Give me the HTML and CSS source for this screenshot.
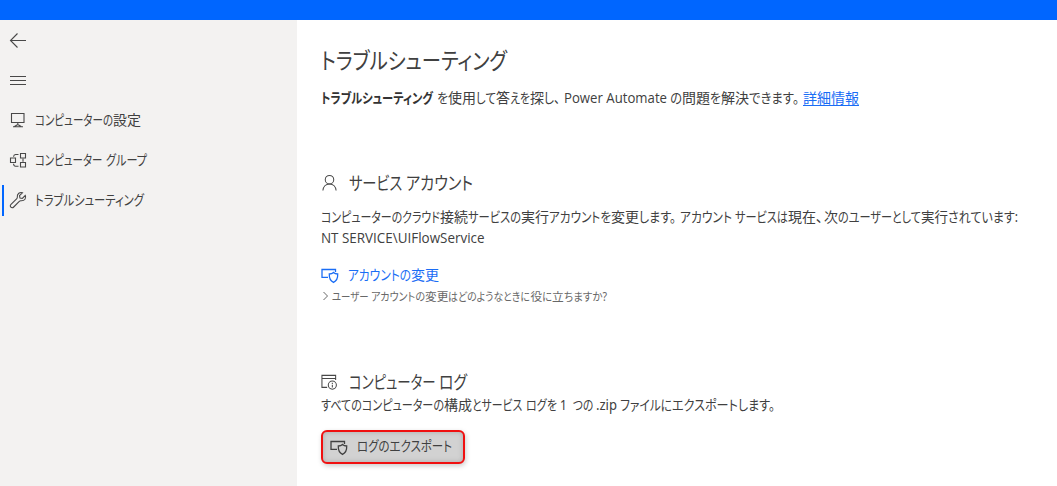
FILE: index.html
```html
<!DOCTYPE html>
<html lang="ja">
<head>
<meta charset="utf-8">
<title>トラブルシューティング</title>
<link rel="stylesheet" href="styles.css">
</head>
<body>
<div class="topbar"></div>
<div class="shell">
  <nav class="sidebar">
    <div class="item"><svg class="icon" viewBox="0 0 18 18"><path d="M17 9.500H1.500M8.500 2.500l-7 7 7 7"/></svg></div>
    <div class="item"><svg class="icon" viewBox="0 0 18 18"><path d="M1 5.500h16M1 9.500h16M1 13.500h16"/></svg></div>
    <div class="item"><svg class="icon" viewBox="0 0 18 18"><path d="M2.500 2.500h12.500v9h-12.500zM8.800 11.500v2M4 15.800h10M5.500 15.500l3.300-2 3.300 2"/></svg><span class="label"><span data-w="78">コンピューターの</span><span data-w="28">設定</span></span></div>
    <div class="item"><svg class="icon" viewBox="0 0 18 18"><path d="M1.500 7h5v4.500h-5zM11.500 2.500h5V7h-5zM11.500 11.500h5V16h-5zM4.500 5.800C4.700 4.300 5.500 3.500 6.500 3.500h3M4.500 12.700c.2 1.700 1 2.500 2 2.500h3M14 7.800v2.900"/></svg><span class="label"><span data-w="70">コンピューター </span><span class="gap" data-w="41">グループ</span></span></div>
    <div class="item selected"><svg class="icon" viewBox="0 0 18 18"><path d="M16.300 4.500l-3 3-2.300-.5-.5-2.300 3-3C11 .8 7.800 2.500 8.300 6.300c0 .8-.3 1.200-.7 1.600L2 13.300c-2 2 .7 4.700 2.700 2.700l5.600-5.600c.5-.5 1-.7 1.700-.6 3.700.3 5.500-2.700 4.300-5.300z"/></svg><span class="label"><span data-w="109">トラブルシューティング</span></span></div>
  </nav>
  <main class="content">
    <h1 class="title"><span data-w="186">トラブルシューティング</span></h1>
    <p class="line intro"><b data-w="112">トラブルシューティング</b><span class="gap" data-w="14"> を</span><span>使用</span><span data-w="20">して</span><span>答</span><span data-w="20">えを</span><span>探</span><span data-w="16">し、</span><span class="latin wide-gap" data-w="103">Power Automate</span><span data-w="15"> の</span><span>問題</span><span data-w="11">を</span><span>解決</span><span data-w="50">できます。</span><a class="link wide-gap" href="#">詳細情報</a></p>

    <section class="service">
      <h2 class="heading"><svg class="icon" viewBox="0 0 18 18"><circle cx="9" cy="5.500" r="4.500"/><path d="M2 17c.3-4 3-7 7-7s6.700 3 7 7"/></svg><span><span data-w="57">サービス </span><span data-w="67">アカウント</span></span></h2>
      <p class="line"><span data-w="119">コンピューターのクラウド</span><span>接続</span><span data-w="53">サービスの</span><span>実行</span><span data-w="62">アカウントを</span><span>変更</span><span data-w="37">します。</span><span class="wide-gap" data-w="55">アカウント </span><span data-w="53">サービスは</span><span>現在</span><span data-w="7">、</span><span class="gap">次</span><span data-w="83">のユーザーとして</span><span data-w="27">実行</span><span data-w="70">されています:</span></p>
      <p class="line"><span class="latin" data-w="163.500">NT SERVICE\UIFlowService</span></p>
      <a class="change" href="#"><svg class="icon shield" viewBox="0 0 18 18"><path d="M7 11.300H1V3.500h13.500V6M8.300 8q2.600 0 4.200-1.500Q14.100 8 16.700 8c.2 4.200-1.200 6.900-4.200 8.400-3-1.500-4.400-4.200-4.200-8.400z"/></svg><span><span data-w="63">アカウントの</span><span>変更</span></span></a>
      <p class="hint"><svg class="chevron" viewBox="0 0 8 10"><path d="M2 1l4 4-4 4"/></svg><span><span data-w="39">ユーザー </span><span data-w="54">アカウントの</span><span>変更</span><span data-w="82">はどのようなときに</span><span>役</span><span data-w="10">に</span><span>立</span><span data-w="43">ちますか?</span></span></p>
    </section>

    <section class="logs">
      <h2 class="heading"><svg class="icon" viewBox="0 0 18 18"><path d="M6.500 14.700H1V2h14.500v5M1 5.300h14.500"/><circle cx="12" cy="12.300" r="4.300"/><path d="M12 12v2.700M12 9.800v1.200"/></svg><span><span data-w="90">コンピューター </span><span data-w="28">ログ</span></span></h2>
      <p class="line"><span data-w="123">すべてのコンピューターの</span><span>構成</span><span data-w="53">とサービス </span><span class="gap" data-w="31">ログを</span><span data-w="13"> 1 </span><span data-w="26"> つの </span><span data-w="21">.zip</span><span data-w="55"> ファイルに</span><span data-w="103">エクスポートします。</span></p>
      <button class="export"><svg class="icon shield" viewBox="0 0 18 18"><path d="M7 11.300H1V3.500h13.500V6M8.300 8q2.600 0 4.200-1.500Q14.100 8 16.700 8c.2 4.200-1.200 6.900-4.200 8.400-3-1.500-4.400-4.200-4.200-8.400z"/></svg><span data-w="95">ログのエクスポート</span></button>
    </section>
  </main>
</div>
<script src="fit.js"></script>
</body>
</html>
```

FILE: styles.css
```css
* { box-sizing: border-box; }
body {
  margin: 0;
  height: 486px;
  overflow: hidden;
  background: #fff;
  color: #404040;
  font: 14px/21px "Noto Sans", "Noto Sans CJK JP", sans-serif;
  white-space: nowrap;
}
h1, h2, p { margin: 0; font-weight: 400; }
a { color: #1a6df5; }
[data-w] {
  display: inline-block;
  white-space: pre;
  transform-origin: 0 50%;
  font-feature-settings: "palt";
}
.gap { margin-left: 1px; }
.wide-gap { margin-left: 4px; }
.latin { font-family: "Open Sans", "Noto Sans", sans-serif; }
.icon {
  width: 18px;
  height: 18px;
  flex: none;
  fill: none;
  stroke: #484848;
  stroke-width: 1.1;
}
.shield { stroke: currentColor; stroke-width: 1.3; }
.topbar { height: 20px; background: #0066ff; }
.shell { display: flex; height: 466px; }
.sidebar { width: 297px; background: #f3f2f1; }
.item {
  display: flex;
  align-items: center;
  gap: 8px;
  height: 40px;
  padding-left: 9px;
}
.label { margin-top: -2px; }
.selected { background: linear-gradient(#0066ff, #0066ff) no-repeat 2px 5px / 2px 31px; }
.content { flex: 1; padding: 23px 0 0 24px; }
.title { font-size: 23px; line-height: 34px; }
.line { height: 21px; }
.intro { margin-top: 10px; }
.intro b { color: #333; }
.link { text-underline-offset: 2px; }
.service { margin-top: 62px; }
.heading {
  display: flex;
  align-items: center;
  gap: 11px;
  height: 26px;
  font-size: 18px;
  line-height: 26px;
}
.heading .icon { width: 17px; }
.service .heading { margin-bottom: 10px; }
.change {
  display: flex;
  align-items: center;
  gap: 9px;
  height: 21px;
  margin-top: 16px;
  text-decoration: none;
}
.change > span { margin-top: -1px; }
.hint {
  display: flex;
  align-items: center;
  gap: 2px;
  height: 20px;
  margin-top: 1px;
  color: #686868;
  font-size: 11.700px;
  line-height: 20px;
}
.chevron { width: 9px; height: 10px; fill: none; stroke: currentColor; }
.logs { margin-top: 63px; }
.logs .line { margin-top: -1px; }
.export {
  display: flex;
  align-items: center;
  gap: 9px;
  width: 144px;
  height: 34px;
  margin-top: 15px;
  padding: 0 0 0 7px;
  border: 2px solid #f01010;
  border-radius: 6px;
  background: #d2d2d2;
  box-shadow: inset 0 0 5px #aaa, 1px 2px 5px #ccc;
  color: inherit;
  font: inherit;
}
.export > span { margin-top: -3px; }
```

FILE: fit.js
```js
document.querySelectorAll("[data-w]").forEach(function (run) {
  var width = Number(run.dataset.w);
  var scale = width / run.getBoundingClientRect().width;
  run.style.width = width + "px";
  run.style.transform = "scaleX(" + scale + ")";
});
```
